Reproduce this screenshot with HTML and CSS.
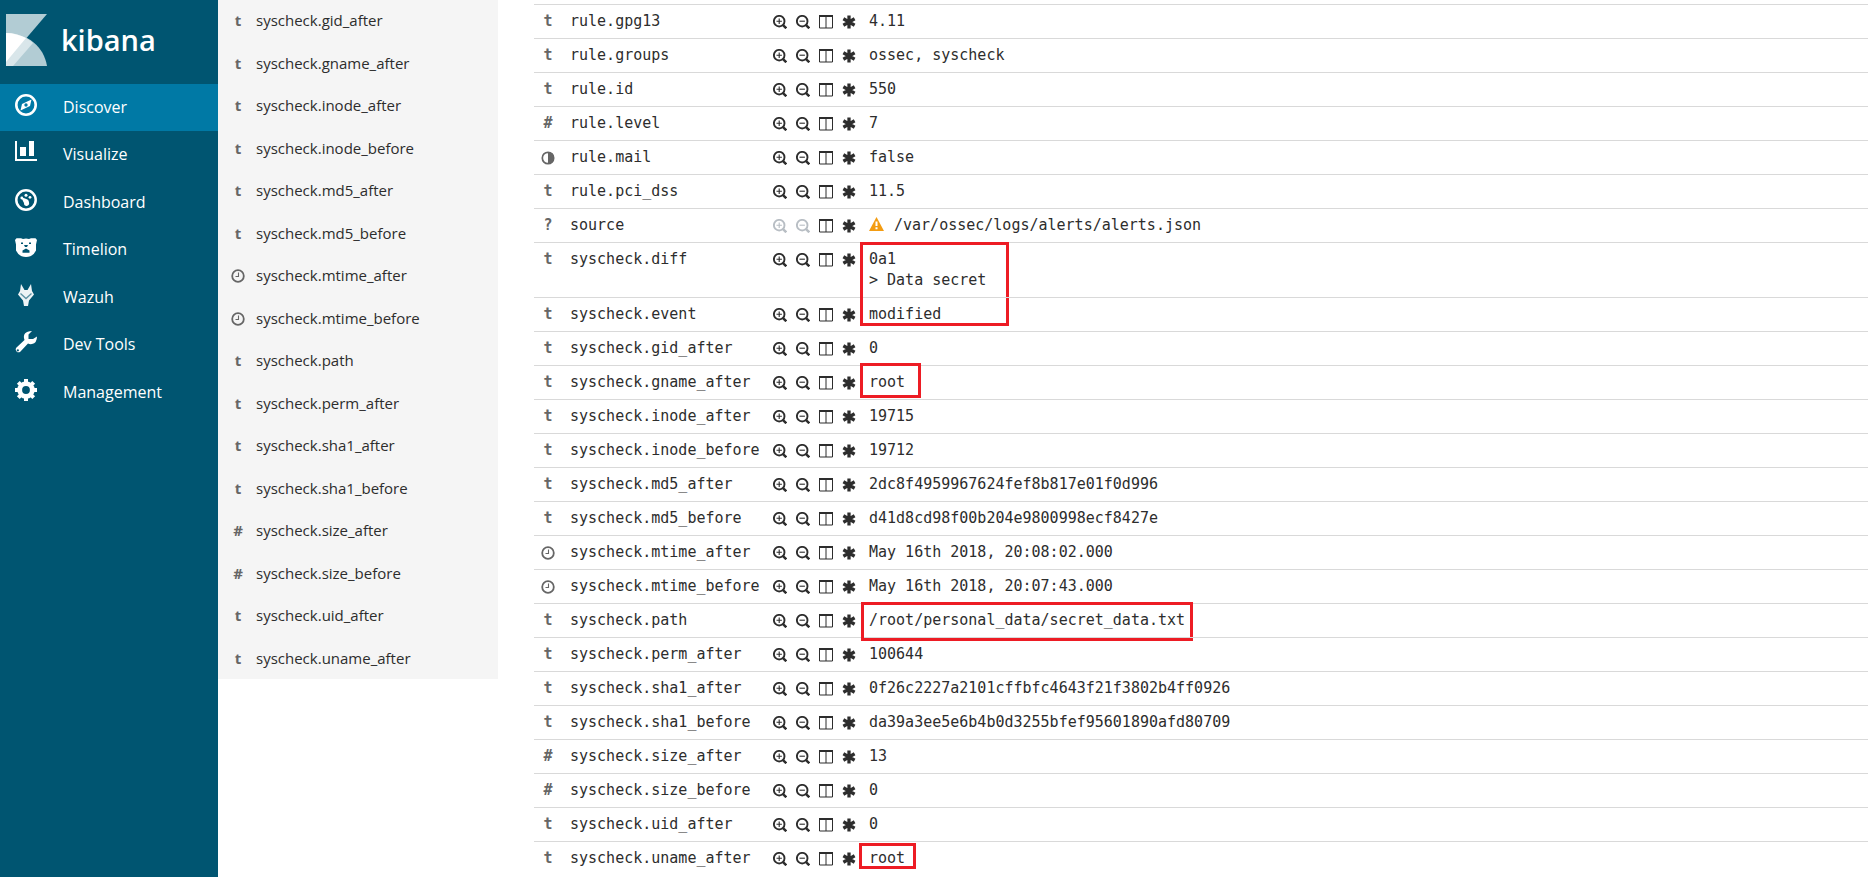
FILE: index.html
```html
<!DOCTYPE html>
<html lang="en">
<head>
<meta charset="utf-8">
<title>Kibana</title>
<link rel="stylesheet" href="styles.css">
</head>
<body>
<svg class="sprite" aria-hidden="true">
  <symbol id="zoom-in" viewBox="0 0 14 14"><circle cx="6.200" cy="6.200" r="5.300" fill="none" stroke="currentColor" stroke-width="1.900"/><path d="M9.800 9.800 13.300 13.300" stroke="currentColor" stroke-width="2.500"/><path d="M3.500 6.200h5.400M6.200 3.500v5.400" stroke="currentColor" stroke-width="1.100"/></symbol>
  <symbol id="zoom-out" viewBox="0 0 14 14"><circle cx="6.200" cy="6.200" r="5.300" fill="none" stroke="currentColor" stroke-width="1.900"/><path d="M9.800 9.800 13.300 13.300" stroke="currentColor" stroke-width="2.500"/><path d="M3.500 6.200h5.400" stroke="currentColor" stroke-width="1.100"/></symbol>
  <symbol id="columns" viewBox="0 0 14 14"><path d="M.5 1v12h13V1M7 2v11" fill="none" stroke="currentColor"/><path d="M0 0h14v2H0z" fill="currentColor"/></symbol>
  <symbol id="asterisk" viewBox="0 0 14 14"><path d="M7 .5v13M1.400 3.800l11.200 6.400M12.600 3.800 1.400 10.200" stroke="currentColor" stroke-width="3.300"/></symbol>
  <symbol id="clock" viewBox="0 0 14 14"><circle cx="7" cy="7" r="5.800" fill="none" stroke="currentColor" stroke-width="1.800"/><path d="M7.500 3.500v4H4.500" fill="none" stroke="currentColor" stroke-width="1.100"/></symbol>
  <symbol id="half" viewBox="0 0 14 14"><circle cx="7" cy="7" r="5.700" fill="none" stroke="currentColor" stroke-width="1.700"/><path d="M7 1v12A6 6 0 0 0 7 1z" fill="currentColor"/></symbol>
</svg>
<div class="app">
  <aside class="nav">
    <a class="brand" href="#">
      <svg class="brand-mark" viewBox="0 0 41 52" aria-hidden="true"><path d="M0 0h41L0 48z" fill="#b2ccd4"/><path d="M0 19c22 0 38 14 41 33H0z" fill="#b2ccd4"/><path d="M0 19c10 0 19 3 27 10L7 52H0z" fill="#d9e6ea"/><path d="M0 19c7 0 14 2 20 5L0 48z" fill="#fff"/></svg>
      <span class="brand-name">kibana</span>
    </a>
    <nav class="nav-list">
      <a class="nav-item active" href="#"><svg viewBox="0 0 22 22" aria-hidden="true"><circle cx="11" cy="11" r="9.700" fill="none" stroke="#fff" stroke-width="2.600"/><path fill="#fff" fill-rule="evenodd" d="M16.500 5.500 15 12l-9.500 4.500L7 10zM11 9.300a1.700 1.700 0 1 0 0 3.400 1.700 1.700 0 0 0 0-3.400z"/></svg><span>Discover</span></a>
      <a class="nav-item" href="#"><svg viewBox="0 0 22 22" aria-hidden="true"><path fill="#fff" d="M0 0h2v18h20v2H0zM5 6h6v9H5zM14 0h5v15h-5z"/></svg><span>Visualize</span></a>
      <a class="nav-item" href="#"><svg viewBox="0 0 22 22" aria-hidden="true"><circle cx="11" cy="11" r="9.700" fill="none" stroke="#fff" stroke-width="2.500"/><g fill="#fff"><circle cx="11" cy="6.300" r="1.500"/><circle cx="15" cy="8.300" r="1.400"/><circle cx="6.800" cy="9" r="1.400"/><path d="M6 8l6.500 2.500q1.500 1 1.500 3a2.600 2.600 0 1 1-5 .5z"/></g></svg><span>Dashboard</span></a>
      <a class="nav-item" href="#"><svg viewBox="0 0 22 22" aria-hidden="true"><path fill="#fff" fill-rule="evenodd" d="M1.500 2.200H6L8 3q3-1 6 0l2-.8h4.500L22 4l-1 4.500v6q-3 6.500-10 6.500T1 14.500v-6L0 4zM6 6.500v1.600h2V6.500zM14 6.500v1.600h2V6.500zM9 9l1 2h2l1-2zM11 12.500 7.500 14.500v2.300h7v-2.300z"/></svg><span>Timelion</span></a>
      <a class="nav-item" href="#"><svg viewBox="0 0 22 22" aria-hidden="true"><path fill="#edf3f5" d="M6 0l3.500 6h3L16 0l1 7 2 3.500-5 6-1 5.500H9l-1-5.500-5-6L5 7z"/><path d="M5.500 9.500 11 14.500l5.500-5" fill="none" stroke="#5c91a3" stroke-width="1.300"/></svg><span>Wazuh</span></a>
      <a class="nav-item" href="#"><svg viewBox="0 0 22 22" aria-hidden="true"><path fill="#fff" fill-rule="evenodd" d="M17 0 13.500 3.500v4.500h4.500L22 5.500Q22 12 17 13q-2 .5-4-.5l-8 8.500a3 3 0 0 1-4-4l8.500-8Q8 5 10 2.500T17 0zM2.800 18.200a1.100 1.100 0 1 0 .1 0z"/></svg><span>Dev Tools</span></a>
      <a class="nav-item" href="#"><svg viewBox="0 0 22 22" aria-hidden="true"><circle cx="11" cy="11" r="6.300" fill="none" stroke="#fff" stroke-width="4.800"/><path d="M11 0v4M11 18v4M0 11h4M18 11h4M3.300 3.300l3 3M15.700 15.700l3 3M3.300 18.700l3-3M15.700 6.300l3-3" stroke="#fff" stroke-width="4"/></svg><span>Management</span></a>
    </nav>
  </aside>
  <section class="fields" aria-label="Available fields">
    <ul class="field-list" id="field-list"></ul>
  </section>
  <main class="doc">
    <table class="doc-table"><tbody id="doc-rows"></tbody></table>
  </main>
</div>
<script src="app.js"></script>
</body>
</html>
```
FILE: styles.css
```css
* { box-sizing: border-box; }
body { margin: 0; background: #fff; color: #2d2d2d; font-family: "Open Sans", sans-serif; font-size: 15px; }
.sprite { display: none; }
.app { display: flex; align-items: flex-start; height: 100vh; overflow: hidden; }
.nav { flex: none; width: 218px; align-self: stretch; background: #005571; }
.brand { display: flex; align-items: flex-start; gap: 14px; height: 84px; padding: 14px 6px 0; color: #fff; text-decoration: none; }
.brand-mark { width: 41px; height: 52px; }
.brand-name { font-size: 29px; font-weight: 600; line-height: 52px; }
.nav-item { display: flex; align-items: flex-start; gap: 26px; height: 47px; padding: 10px 15px 0; color: #fff; font-size: 16px; line-height: 26px; text-decoration: none; }
.nav-item:nth-child(even) { height: 48px; }
.nav-item svg { flex: none; width: 22px; height: 22px; }
.active { background: #0079a5; }
.fields { flex: none; width: 280px; background: #f5f5f5; }
.field-list { margin: 0; padding: 0; list-style: none; }
.field-list li { display: flex; gap: 11px; height: 43px; padding: 11px 13px 0; line-height: 21px; }
.field-list li:nth-child(even) { height: 42px; }
.field-list li:first-child { height: 42px; padding-top: 10px; }
.type { display: flex; align-items: center; justify-content: center; width: 14px; height: 21px; color: #666; font-weight: 700; }
.icon { display: block; width: 14px; height: 14px; }
.doc { flex: 1; min-width: 0; padding: 4px 3px 0 36px; }
.doc-table { width: 100%; border-collapse: separate; border-spacing: 0; font-family: "DejaVu Sans Mono", monospace; font-size: 15px; line-height: 21px; }
.doc-table td { padding: 6px 0; border-top: 1px solid #d9d9d9; vertical-align: top; white-space: pre; text-align: left; }
.doc-table .type-cell { width: 36px; padding-left: 7px; }
.doc-table .name-cell { width: 203px; }
.doc-table .action-cell { width: 96px; }
.actions { display: flex; align-items: center; gap: 9px; height: 21px; }
.actions button { padding: 0; border: 0; background: none; color: #2d2d2d; }
.actions button:disabled { color: #b8bec4; }
.value { position: relative; }
.warn { display: inline-block; width: 15px; height: 14px; margin-right: 10px; vertical-align: -1px; }
.mark { position: absolute; border: 3px solid #ed1c24; pointer-events: none; }
.mark-diff { left: -9px; top: -1px; width: 149px; height: 84px; }
.mark-group { left: -9px; top: -3px; width: 61px; height: 35px; }
.mark-path { left: -8px; top: -2px; width: 332px; height: 39px; }
.mark-user { left: -10px; top: 1px; width: 57px; height: 26px; }
```
FILE: app.js
```js
const fields = [
  ["t", "gid_after"], ["t", "gname_after"], ["t", "inode_after"], ["t", "inode_before"],
  ["t", "md5_after"], ["t", "md5_before"], ["clock", "mtime_after"], ["clock", "mtime_before"],
  ["t", "path"], ["t", "perm_after"], ["t", "sha1_after"], ["t", "sha1_before"],
  ["#", "size_after"], ["#", "size_before"], ["t", "uid_after"], ["t", "uname_after"]
];

const rows = [
  ["t", "rule.gpg13", "4.11"],
  ["t", "rule.groups", "ossec, syscheck"],
  ["t", "rule.id", "550"],
  ["#", "rule.level", "7"],
  ["half", "rule.mail", "false"],
  ["t", "rule.pci_dss", "11.5"],
  ["?", "source", "/var/ossec/logs/alerts/alerts.json"],
  ["t", "syscheck.diff", "0a1\n&gt; Data secret", "diff"],
  ["t", "syscheck.event", "modified"],
  ["t", "syscheck.gid_after", "0"],
  ["t", "syscheck.gname_after", "root", "group"],
  ["t", "syscheck.inode_after", "19715"],
  ["t", "syscheck.inode_before", "19712"],
  ["t", "syscheck.md5_after", "2dc8f4959967624fef8b817e01f0d996"],
  ["t", "syscheck.md5_before", "d41d8cd98f00b204e9800998ecf8427e"],
  ["clock", "syscheck.mtime_after", "May 16th 2018, 20:08:02.000"],
  ["clock", "syscheck.mtime_before", "May 16th 2018, 20:07:43.000"],
  ["t", "syscheck.path", "/root/personal_data/secret_data.txt", "path"],
  ["t", "syscheck.perm_after", "100644"],
  ["t", "syscheck.sha1_after", "0f26c2227a2101cffbfc4643f21f3802b4ff0926"],
  ["t", "syscheck.sha1_before", "da39a3ee5e6b4b0d3255bfef95601890afd80709"],
  ["#", "syscheck.size_after", "13"],
  ["#", "syscheck.size_before", "0"],
  ["t", "syscheck.uid_after", "0"],
  ["t", "syscheck.uname_after", "root", "user"]
];

const icon = id => `<svg class="icon" aria-hidden="true"><use href="#${id}"/></svg>`;
const type = t => `<span class="type">${t.length > 1 ? icon(t) : t}</span>`;
const button = (id, label, off) =>
  `<button type="button" aria-label="${label}"${off ? " disabled" : ""}>${icon(id)}</button>`;
const warning = `<svg class="warn" viewBox="0 0 15 14" aria-hidden="true"><path fill="#f39c12" d="M7.500 0 15 14H0z"/><path d="M7.500 4.500v4.500M7.500 10.300v1.900" stroke="#fff" stroke-width="2"/></svg>`;

document.getElementById("field-list").innerHTML = fields
  .map(([t, name]) => `<li>${type(t)}<span class="name">syscheck.${name}</span></li>`)
  .join("");

document.getElementById("doc-rows").innerHTML = rows
  .map(([t, name, value, mark]) => {
    const off = t === "?";
    return `<tr><td class="type-cell">${type(t)}</td><td class="name-cell">${name}</td>` +
      `<td class="action-cell"><div class="actions">${button("zoom-in", "Filter for value", off)}` +
      `${button("zoom-out", "Filter out value", off)}${button("columns", "Toggle column in table")}` +
      `${button("asterisk", "Filter for field present")}</div></td>` +
      `<td class="value">${off ? warning : ""}${value}${mark ? `<span class="mark mark-${mark}"></span>` : ""}</td></tr>`;
  })
  .join("");
```
